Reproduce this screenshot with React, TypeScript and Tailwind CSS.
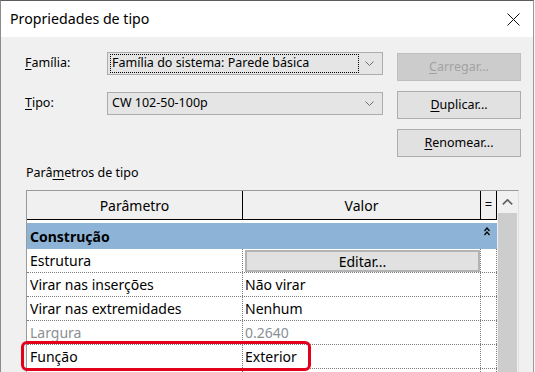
import React from "react";

const Chevron = () => (
  <svg width="9" height="5" viewBox="0 0 9 5" className="block">
    <path d="M0.5 0.5 L4.5 4.5 L8.5 0.5" fill="none" stroke="#707070" strokeWidth="1" />
  </svg>
);

const Combo = ({ text, focused }: { text: string; focused?: boolean }) => (
  <div className="w-[276px] h-[23px] bg-[#e5e5e5] border border-[#acacac] flex items-center">
    <div
      className={
        focused
          ? "ml-[2px] w-[249px] h-[19px] border border-dotted border-black flex items-center pl-[1px]"
          : "ml-[2px] w-[249px] h-[19px] border border-transparent flex items-center pl-[1px]"
      }
    >
      <span className="text-[12.5px] leading-none whitespace-nowrap">{text}</span>
    </div>
    <div className="flex-1 flex justify-center pr-[2px]">
      <Chevron />
    </div>
  </div>
);

const Btn = ({ children, disabled }: { children: React.ReactNode; disabled?: boolean }) => (
  <div
    className={
      disabled
        ? "w-[124px] h-[28px] bg-[#cccccc] border border-[#bfbfbf] text-[#a2a2a2] flex items-center justify-center text-[12.5px]"
        : "w-[124px] h-[28px] bg-[#e1e1e1] border border-[#adadad] text-black flex items-center justify-center text-[12.5px]"
    }
  >
    {children}
  </div>
);

const Row = ({
  label,
  value,
  muted,
  button,
}: {
  label: string;
  value?: string;
  muted?: boolean;
  button?: boolean;
}) => (
  <div className="h-[24px] flex border-b border-dotted border-[#7a7a7a] shrink-0">
    <div
      className={
        muted
          ? "w-[216px] border-r border-dotted border-[#7a7a7a] flex items-center pl-[3px] text-[14px] text-[#8b8f94] whitespace-nowrap"
          : "w-[216px] border-r border-dotted border-[#7a7a7a] flex items-center pl-[3px] text-[14px] whitespace-nowrap"
      }
    >
      {label}
    </div>
    <div
      className={
        muted
          ? "w-[238px] border-r border-dotted border-[#7a7a7a] flex items-center pl-[2px] text-[14px] text-[#8b8f94]"
          : "w-[238px] border-r border-dotted border-[#7a7a7a] flex items-center pl-[2px] text-[14px]"
      }
    >
      {button ? (
        <div className="self-start mt-[1px] w-[236px] h-[22px] bg-[#e1e1e1] border-2 border-[#b3b3b3] flex items-center justify-center text-[14px]">
          Editar...
        </div>
      ) : (
        value
      )}
    </div>
    <div className="w-[16px] border-r border-dotted border-[#7a7a7a]" />
  </div>
);

export default function App() {
  return (
    <div className="w-[535px] h-[372px] overflow-hidden bg-[#f8f8f8] font-['Noto_Sans',sans-serif] text-black">
      <div className="relative w-[534px] h-[372px] border-l border-r border-t border-l-[#8c8c8c] border-r-[#9a9a9a] border-t-[#5c5c5c] bg-[#f0f0f0] flex flex-col">
        {/* Title bar */}
        <div className="h-[36px] shrink-0 bg-white flex items-center justify-between pl-[9px] pr-[13px]">
          <span className="text-[14.2px] leading-none">Propriedades de tipo</span>
          <svg width="13" height="13" viewBox="0 0 13 13" className="block">
            <path d="M0.5 0.5 L12.5 12.5 M12.5 0.5 L0.5 12.5" stroke="#111" strokeWidth="1" fill="none" />
          </svg>
        </div>

        {/* Body */}
        <div className="flex-1 min-h-0 pl-[24px] flex flex-col">
          <div className="flex items-start shrink-0">
            <div className="flex flex-col pt-[15px] gap-[17px]">
              <div className="flex items-center">
                <div className="w-[82px] text-[12.5px]">
                  <span className="underline underline-offset-2">F</span>amília:
                </div>
                <Combo text="Família do sistema: Parede básica" focused />
              </div>
              <div className="flex items-center">
                <div className="w-[82px] text-[12.5px]">
                  <span className="underline underline-offset-2">T</span>ipo:
                </div>
                <Combo text="CW 102-50-100p" />
              </div>
            </div>
            <div className="flex flex-col pt-[16px] gap-[10px] ml-[14px]">
              <Btn disabled>
                <span>
                  <span className="underline underline-offset-2">C</span>arregar...
                </span>
              </Btn>
              <Btn>
                <span>
                  <span className="underline underline-offset-2">D</span>uplicar...
                </span>
              </Btn>
              <Btn>
                <span>
                  <span className="underline underline-offset-2">R</span>enomear...
                </span>
              </Btn>
            </div>
          </div>

          <div className="mt-[8px] h-[17px] flex items-center text-[12.5px] shrink-0 ml-[1px]">
            <span>
              Parâ<span className="underline underline-offset-2">m</span>etros de tipo
            </span>
          </div>

          {/* Table */}
          <div className="mt-[8px] ml-[1px] w-[493px] flex-1 min-h-0 border-t border-l border-r border-t-[#9a9a9a] border-l-[#9a9a9a] border-r-[#e0e0e0] bg-white flex overflow-hidden">
            <div className="w-[470px] flex flex-col">
              <div className="h-[29px] shrink-0 flex border-b border-black bg-[#f0f0f0]">
                <div className="w-[216px] border-r border-black flex items-center justify-center text-[14px]">
                  Parâmetro
                </div>
                <div className="w-[238px] border-r border-black flex items-center justify-center text-[14px]">
                  Valor
                </div>
                <div className="w-[16px] border-r border-black flex items-center justify-center text-[13px]">
                  =
                </div>
              </div>
              <div className="h-[3px] shrink-0 bg-white" />
              <div className="h-[26px] shrink-0 bg-[#8db4d6] flex justify-between pl-[3px] pr-[7px]">
                <span className="self-center font-bold text-[14px]">Construção</span>
                <svg width="6" height="9" viewBox="0 0 6 9" className="mt-[4px] block">
                  <path d="M0.5 4 L3 1 L5.5 4 M0.5 8 L3 5 L5.5 8" fill="none" stroke="#000" strokeWidth="1.3" />
                </svg>
              </div>
              <Row label="Estrutura" button />
              <Row label="Virar nas inserções" value="Não virar" />
              <Row label="Virar nas extremidades" value="Nenhum" />
              <Row label="Largura" value="0.2640" muted />
              <Row label="Função" value="Exterior" />
              <Row label="" value="" />
            </div>
            <div className="w-[21px] bg-[#f0f0f0] flex flex-col items-center">
              <div className="h-[22px] w-full flex items-center justify-center">
                <svg width="11" height="6" viewBox="0 0 11 6" className="block">
                  <path d="M0.8 5.3 L5.5 0.8 L10.2 5.3" fill="none" stroke="#606060" strokeWidth="1.6" />
                </svg>
              </div>
              <div className="w-[19px] flex-1 bg-[#cdcdcd]" />
            </div>
          </div>
        </div>

        {/* highlight */}
        <div className="absolute left-[20px] top-[340px] w-[290px] h-[30px] border-[3px] border-[#e2001a] rounded-[6px]" />
      </div>
    </div>
  );
}
